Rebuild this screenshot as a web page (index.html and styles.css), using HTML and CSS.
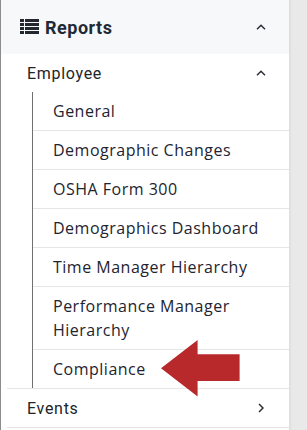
FILE: index.html
```html
<!DOCTYPE html>
<html>
<head>
<meta charset="utf-8">
<link rel="stylesheet" href="styles.css">
</head>
<body>
<div class="layout">
  <nav class="panel">
    <div class="header">
      <div class="title">
        <svg class="list-icon" width="19" height="15" viewBox="0 0 19 15">
          <rect x="0" y="0" width="4" height="3"/><rect x="5" y="0" width="14" height="3"/>
          <rect x="0" y="4" width="4" height="3"/><rect x="5" y="4" width="14" height="3"/>
          <rect x="0" y="8" width="4" height="3"/><rect x="5" y="8" width="14" height="3"/>
          <rect x="0" y="12" width="4" height="3"/><rect x="5" y="12" width="14" height="3"/>
        </svg>
        <span>Reports</span>
      </div>
      <svg class="chev" width="10" height="6" viewBox="0 0 10 6"><path d="M1 5.2 L5 1.2 L9 5.2"/></svg>
    </div>
    <div class="group-row">
      <span>Employee</span>
      <svg class="chev" width="10" height="6" viewBox="0 0 10 6"><path d="M1 5.2 L5 1.2 L9 5.2"/></svg>
    </div>
    <ul class="sublist">
      <li class="item">General</li>
      <li class="item">Demographic Changes</li>
      <li class="item">OSHA Form 300</li>
      <li class="item">Demographics Dashboard</li>
      <li class="item">Time Manager Hierarchy</li>
      <li class="item">Performance Manager<br>Hierarchy</li>
      <li class="item last">Compliance
        <svg class="arrow" width="80" height="57" viewBox="0 0 80 57"><path d="M0 28.3 L36.6 0 L36.6 14.3 L78.6 14.3 L78.6 41 L36.6 41 L36.6 56.6 Z"/></svg>
      </li>
    </ul>
    <div class="group-row events">
      <span>Events</span>
      <svg class="chev-r" width="6" height="10" viewBox="0 0 6 10"><path d="M1 1 L5 5 L1 9"/></svg>
    </div>
  </nav>
  <div class="track"></div>
</div>
</body>
</html>
```
FILE: styles.css
```css
html, body {
  margin: 0;
  padding: 0;
  background: #ffffff;
}
.layout {
  display: flex;
  height: 430px;
  overflow: hidden;
}
.panel {
  flex: 0 0 288px;
  border-left: 1px solid #8c8c8c;
  background: #ffffff;
  font-family: Roboto, "Liberation Sans", sans-serif;
  color: #212529;
}
.track {
  flex: 1;
  background: #e9e9e9;
  box-shadow: inset 3px 0 3px -2px rgba(0,0,0,0.08);
}
.header {
  height: 54px;
  background: #f7f8fa;
  display: flex;
  align-items: center;
  justify-content: space-between;
  padding: 0 23px 0 19px;
}
.title {
  display: flex;
  align-items: center;
  gap: 6px;
  font-weight: 700;
  font-size: 18px;
  letter-spacing: 0.5px;
  color: #1f2a37;
}
.list-icon {
  fill: #23272e;
  margin-top: -1px;
}
.chev path, .chev-r path {
  fill: none;
  stroke: #2b2f36;
  stroke-width: 1.5;
}
.group-row {
  height: 38px;
  display: flex;
  align-items: center;
  justify-content: space-between;
  margin-left: 6px;
  padding: 0 23px 0 20px;
  font-size: 16px;
  letter-spacing: 0.7px;
}
.group-row.events {
  border-top: 1px solid #e6e6e6;
  border-bottom: 1px solid #e6e6e6;
  padding-right: 25px;
}
.sublist {
  list-style: none;
  margin: 0 0 0 31px;
  padding: 0;
  border-left: 1px solid #707070;
}
.item {
  position: relative;
  padding: 7px 10px 7px 20px;
  line-height: 24px;
  font-family: "Open Sans", "Liberation Sans", sans-serif;
  font-size: 16px;
  letter-spacing: 0.5px;
  color: #1e2430;
  border-bottom: 1px solid #e6e6e6;
}
.item.last {
  border-bottom: none;
}
.arrow {
  position: absolute;
  left: 128px;
  top: -10px;
  fill: #b8292c;
}
```
